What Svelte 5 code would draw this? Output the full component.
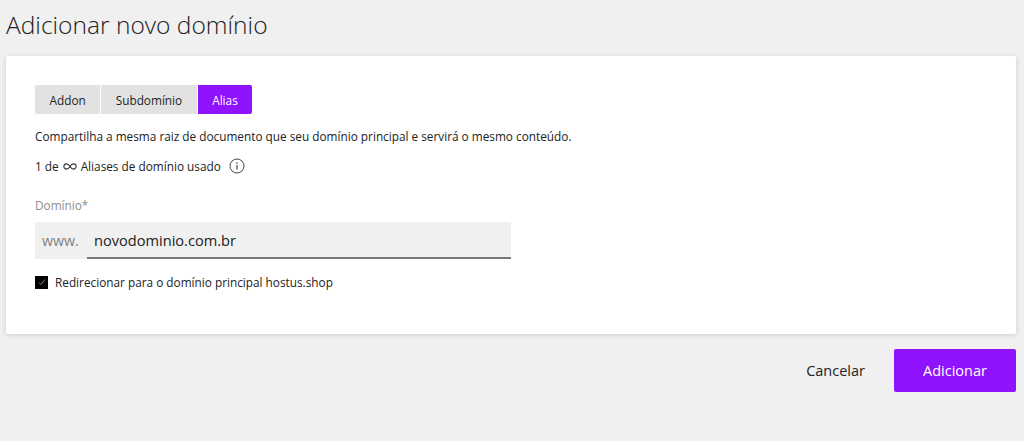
<script>
	const tabs = ['Addon', 'Subdomínio', 'Alias'];
	let active = 'Alias';
	let domain = 'novodominio.com.br';
	let redirect = true;
</script>

<div class="page">
	<h1>Adicionar novo domínio</h1>

	<section class="card">
		<div class="tabs">
			{#each tabs as tab}
				<button class="tab" class:active={active === tab} on:click={() => (active = tab)}>{tab}</button>
			{/each}
		</div>

		<p class="desc">Compartilha a mesma raiz de documento que seu domínio principal e servirá o mesmo conteúdo.</p>

		<p class="usage">
			<span>1 de</span>
			<svg class="inf" width="16" height="7" viewBox="0 0 16 8" fill="none" stroke="#333" stroke-width="1.2">
				<path d="M8 4C6.8 2 5.6 1 4 1 2.300 1 1 2.300 1 4s1.300 3 3 3c1.600 0 2.800-1 4-3 1.200-2 2.400-3 4-3 1.700 0 3 1.300 3 3s-1.300 3-3 3c-1.600 0-2.800-1-4-3z" />
			</svg>
			<span>Aliases de domínio usado</span>
			<svg class="info" width="16" height="16" viewBox="0 0 16 16" fill="none" stroke="#444">
				<circle cx="8" cy="8" r="7" />
				<path d="M8 7v4.500" stroke-width="1.200" />
				<path d="M8 4.300v1.400" stroke-width="1.200" />
			</svg>
		</p>

		<label class="label" for="domain">Domínio*</label>
		<div class="field">
			<span class="prefix">www.</span>
			<input id="domain" bind:value={domain} />
		</div>

		<label class="check">
			<input type="checkbox" bind:checked={redirect} />
			<span class="box">
				{#if redirect}
					<svg width="8" height="8" viewBox="0 0 8 8" fill="none" stroke="#888" stroke-width="1">
						<path d="M1 4.500l2 2 4-5" />
					</svg>
				{/if}
			</span>
			<span>Redirecionar para o domínio principal hostus.shop</span>
		</label>
	</section>

	<div class="actions">
		<button class="cancel">Cancelar</button>
		<button class="submit">Adicionar</button>
	</div>
</div>

<style>
	:global(body) {
		background: #f0f0f0;
	}

	.page {
		height: 441px;
		box-sizing: border-box;
		padding: 0 8px 0 6px;
		font-family: 'Open Sans', 'Noto Sans', sans-serif;
		color: #222;
		overflow: hidden;
	}

	h1 {
		margin: 0;
		padding-top: 8px;
		height: 56px;
		box-sizing: border-box;
		font-size: 24.560px;
		line-height: 34px;
		font-weight: 300;
		color: #222;
	}

	.card {
		height: 278px;
		box-sizing: border-box;
		padding: 29px 29px 0;
		background: #fff;
		border-radius: 2px;
		box-shadow: 0 1px 5px rgba(0, 0, 0, 0.15);
	}

	.tabs {
		display: flex;
		gap: 1px;
	}

	.tab {
		height: 29px;
		padding: 0 14.500px;
		border: 0;
		background: #e2e2e2;
		color: #222;
		font: 500 11.800px 'Open Sans', 'Noto Sans', sans-serif;
		cursor: pointer;
	}
	.tab:first-child {
		border-radius: 2px 0 0 2px;
	}
	.tab:last-child {
		border-radius: 0 2px 2px 0;
	}
	.tab.active {
		background: #9013fe;
		color: #fff;
	}

	.desc {
		margin: 15px 0 0;
		font-size: 11.800px;
		line-height: 15px;
	}

	.usage {
		display: flex;
		align-items: center;
		margin: 14px 0 0;
		font-size: 11.800px;
		line-height: 16px;
	}
	.inf {
		margin: 0 3px 0 3px;
	}
	.info {
		margin-left: 8px;
	}

	.label {
		display: block;
		margin-top: 23px;
		font-size: 11.800px;
		line-height: 16px;
		color: #8e8e8e;
	}

	.field {
		display: flex;
		align-items: center;
		width: 476px;
		height: 37px;
		margin-top: 9px;
		background: #f0f0f0;
	}
	.prefix {
		width: 52px;
		box-sizing: border-box;
		padding-left: 7px;
		font-size: 14.200px;
		color: #808080;
	}
	.field input {
		flex: 1;
		min-width: 0;
		height: 100%;
		box-sizing: border-box;
		padding: 0 7px;
		border: 0;
		border-bottom: 2px solid #777;
		outline: 0;
		background: transparent;
		color: #222;
		font: 14.600px 'Open Sans', 'Noto Sans', sans-serif;
	}

	.check {
		display: flex;
		align-items: center;
		gap: 7px;
		margin-top: 15px;
		font-size: 11.800px;
		line-height: 16px;
		cursor: pointer;
	}
	.check input {
		display: none;
	}
	.box {
		display: flex;
		align-items: center;
		justify-content: center;
		width: 13px;
		height: 13px;
		background: #000;
	}

	.actions {
		display: flex;
		justify-content: flex-end;
		align-items: center;
		margin-top: 15px;
	}
	.cancel {
		margin-right: 29px;
		border: 0;
		padding: 0;
		background: none;
		color: #222;
		font: 14.500px 'Open Sans', 'Noto Sans', sans-serif;
		cursor: pointer;
	}
	.submit {
		width: 122px;
		height: 43px;
		border: 0;
		border-radius: 2px;
		background: #9013fe;
		color: #fff;
		font: 500 14.500px 'Open Sans', 'Noto Sans', sans-serif;
		cursor: pointer;
	}
</style>
